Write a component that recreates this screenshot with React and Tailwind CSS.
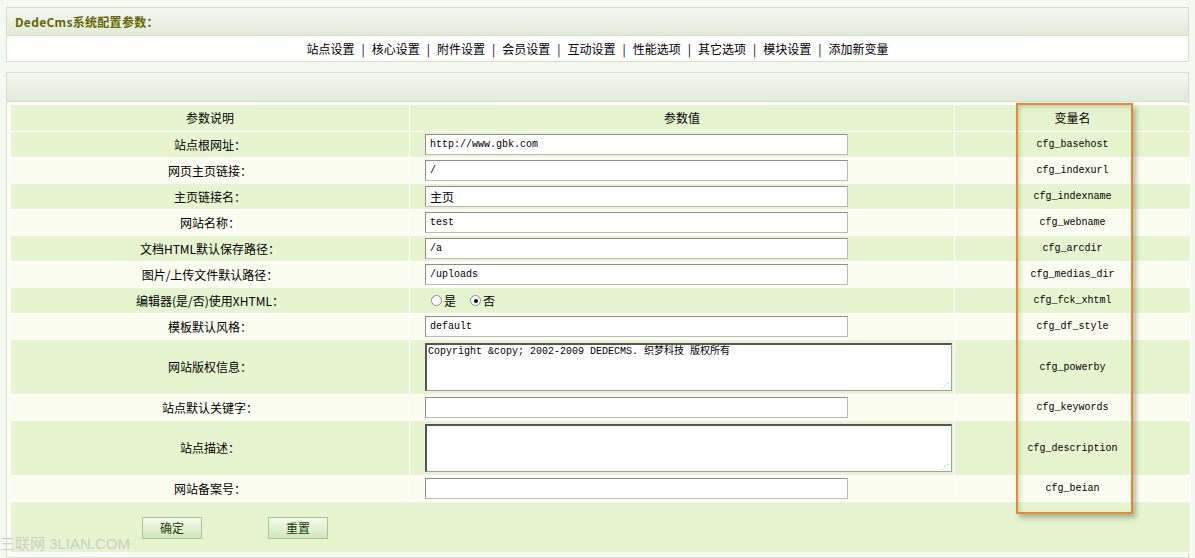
import React from 'react'

const navItems = ['站点设置', '核心设置', '附件设置', '会员设置', '互动设置', '性能选项', '其它选项', '模块设置', '添加新变量']

const rows = [
    { label: '站点根网址：', name: 'cfg_basehost', type: 'input', value: 'http://www.gbk.com' },
    { label: '网页主页链接：', name: 'cfg_indexurl', type: 'input', value: '/' },
    { label: '主页链接名：', name: 'cfg_indexname', type: 'input', value: '主页' },
    { label: '网站名称：', name: 'cfg_webname', type: 'input', value: 'test' },
    { label: '文档HTML默认保存路径：', name: 'cfg_arcdir', type: 'input', value: '/a' },
    { label: '图片/上传文件默认路径：', name: 'cfg_medias_dir', type: 'input', value: '/uploads' },
    { label: '编辑器(是/否)使用XHTML：', name: 'cfg_fck_xhtml', type: 'radio' },
    { label: '模板默认风格：', name: 'cfg_df_style', type: 'input', value: 'default' },
    { label: '网站版权信息：', name: 'cfg_powerby', type: 'textarea', h: 'h-[54px]', value: 'Copyright &copy; 2002-2009 DEDECMS. 织梦科技 版权所有' },
    { label: '站点默认关键字：', name: 'cfg_keywords', type: 'input', value: '' },
    { label: '站点描述：', name: 'cfg_description', type: 'textarea', h: 'h-[54px]', value: '' },
    { label: '网站备案号：', name: 'cfg_beian', type: 'input', value: '' },
]

const cjk = "font-['Noto_Sans_CJK_SC',sans-serif]"
const mono = "font-['Liberation_Mono','Noto_Sans_CJK_SC',monospace]"

function Radio({ checked }) {
    return (
        <span className="inline-flex items-center justify-center w-[11px] h-[11px] rounded-full border border-[#8c8c8c] bg-white">
            {checked && <span className="w-[4px] h-[4px] rounded-full bg-black" />}
        </span>
    )
}

function ValueCell({ row }) {
    if (row.type === 'radio') {
        return (
            <div className="flex items-center gap-[2px] pl-[6px] text-[12px] text-black">
                <Radio />
                <span className="mr-[12px]">是</span>
                <Radio checked />
                <span>否</span>
            </div>
        )
    }
    if (row.type === 'textarea') {
        return (
            <div className="relative w-[527px] h-[48px] bg-white border border-[#a0a0a0] border-t-[#555] border-l-[#555] border-t-2 border-l-2">
                <div className={`pl-[1px] pt-[1px] text-[10px] leading-[12px] text-black ${mono}`}>{row.value}</div>
                <span className="absolute right-[2px] bottom-[1px] text-[8px] leading-[8px] text-[#aaa]">⋰</span>
            </div>
        )
    }
    return (
        <div className={`w-[423px] h-[21px] bg-white border border-[#b9b9b9] border-t-[#8e8e8e] border-l-[#8e8e8e] flex items-center pl-[4px] text-black ${row.value === '主页' ? `text-[12px] ${cjk}` : `text-[10px] ${mono}`}`}>
            {row.value}
        </div>
    )
}

export default function App() {
    return (
        <div className={`relative w-[1195px] h-[558px] overflow-hidden bg-[#f3f9f1] pt-[7px] ${cjk}`}>
            {/* box 1 */}
            <div className="mx-[6px] border border-[#d3dfc6] bg-white">
                <div className="h-[28px] flex items-center pl-[8px] bg-gradient-to-b from-[#f3f8ef] to-[#e3ebdb] border-b border-[#d3dfc6]">
                    <span className="text-[12px] font-bold text-[#666600] tracking-[0.3px]">DedeCms系统配置参数：</span>
                </div>
                <div className="h-[25px] flex items-center justify-center text-[12px] text-black">
                    {navItems.map((n, i) => (
                        <span key={n} className="flex items-center">
                            {i > 0 && <span className="mx-[7px]">|</span>}
                            {n}
                        </span>
                    ))}
                </div>
            </div>

            {/* box 2 */}
            <div className="mx-[6px] mt-[10px] border border-[#d3dfc6] bg-[#fbfdf8] h-[486px]">
                <div className="h-[29px] bg-gradient-to-b from-[#f3f8ef] to-[#e3ebdb] border-b border-[#d3dfc6]" />
                <div className="px-[3px] pt-[2px]">
                    <table className="w-[1181px] border-separate border-spacing-[1px] bg-white text-[12px] text-black">
                        <thead>
                            <tr className="bg-[#e6f5d0] h-[26px]">
                                <td className="w-[398px] text-center">参数说明</td>
                                <td className="w-[544px] text-center">参数值</td>
                                <td className="text-center">变量名</td>
                            </tr>
                        </thead>
                        <tbody>
                            {rows.map((r, i) => (
                                <tr key={r.name} className={`${r.h || 'h-[25px]'} ${i % 2 === 0 ? 'bg-[#e6f5d0]' : 'bg-[#fbfdf0]'}`}>
                                    <td className="text-center">{r.label}</td>
                                    <td className="pl-[15px]"><ValueCell row={r} /></td>
                                    <td className={`text-center text-[10px] ${mono}`}>{r.name}</td>
                                </tr>
                            ))}
                            <tr className="h-[50px] bg-[#e6f5d0]">
                                <td colSpan={3}>
                                    <div className="flex items-center pl-[131px] gap-[66px] pt-[2px]">
                                        {['确定', '重置'].map(b => (
                                            <div key={b} className="w-[60px] h-[22px] flex items-center justify-center border border-[#a8c496] bg-gradient-to-b from-[#f4fbee] to-[#cfe6bd] text-[12px] text-[#1f3d0c]">{b}</div>
                                        ))}
                                    </div>
                                </td>
                            </tr>
                        </tbody>
                    </table>
                </div>
            </div>

            {/* annotation box */}
            <div className="absolute left-[1016px] top-[103px] w-[117px] h-[411px] border-2 border-[#e8892c] shadow-[3px_4px_5px_rgba(90,110,80,0.45),inset_2px_2px_4px_rgba(120,140,110,0.35)]" />

            {/* watermark */}
            <div className="absolute left-0 top-[536px] text-[15px] leading-[16px] text-[#c9cfc6] font-['Liberation_Sans','Noto_Sans_CJK_SC',sans-serif]">三联网 3LIAN.COM</div>
        </div>
    )
}
